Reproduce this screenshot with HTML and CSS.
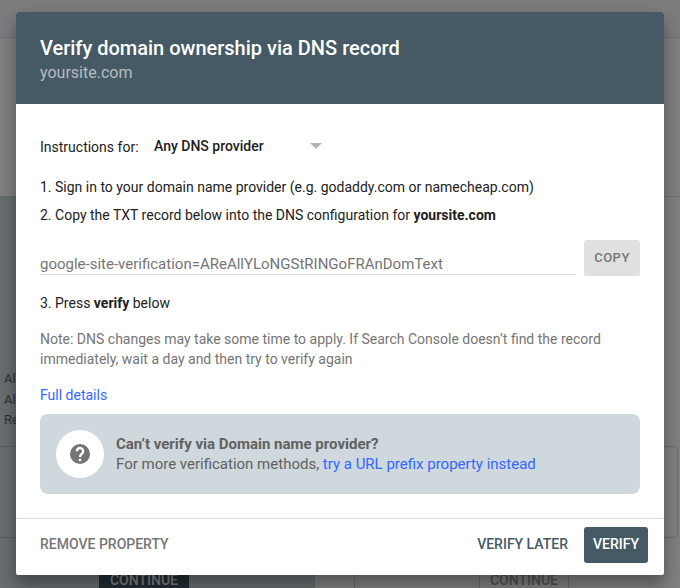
FILE: index.html
```html
<!DOCTYPE html>
<html lang="en">
  <head>
    <meta charset="UTF-8" />
    <title>Verify domain ownership</title>
    <link rel="stylesheet" href="styles.css">
  </head>
  <body>
    <div class="page">
      <div class="topbar"></div>
      <div class="intro"></div>
      <div class="panels">
        <div class="panel panel-domain">
          <ul class="features">
            <li>Al</li>
            <li>Al</li>
            <li>Re</li>
          </ul>
          <div class="field"></div>
          <div class="continue">CONTINUE</div>
        </div>
        <div class="divider"></div>
        <div class="panel panel-prefix">
          <div class="field"></div>
          <div class="continue">CONTINUE</div>
        </div>
      </div>
    </div>

    <div class="overlay">
      <div class="dialog" role="dialog">
        <header class="dialog-header">
          <h1>Verify domain ownership via DNS record</h1>
          <p>yoursite.com</p>
        </header>
        <div class="dialog-body">
          <div class="provider">
            <span class="provider-label">Instructions for:</span>
            <div class="select">
              <span>Any DNS provider</span>
              <i class="arrow"></i>
            </div>
          </div>
          <p class="step">1. Sign in to your domain name provider (e.g. godaddy.com or namecheap.com)</p>
          <p class="step">2. Copy the TXT record below into the DNS configuration for <b>yoursite.com</b></p>
          <div class="record">
            <div class="record-text">google-site-verification=AReAllYLoNGStRINGoFRAnDomText</div>
            <button class="copy">COPY</button>
          </div>
          <p class="step">3. Press <b>verify</b> below</p>
          <p class="note">Note: DNS changes may take some time to apply. If Search Console doesn’t find the record immediately, wait a day and then try to verify again</p>
          <a class="details">Full details</a>
          <div class="help">
            <div class="help-icon">
              <svg width="24" height="24" viewBox="0 0 24 24">
                <circle cx="12" cy="12" r="10" fill="#757575"/>
                <path d="M8.900 9.200a3.100 3.100 0 1 1 5.200 2.200c-1.200 1.100-2.100 1.600-2.100 3.600" fill="none" stroke="#fff" stroke-width="2.400"/>
                <path d="M10.800 16.700h2.400v2.400h-2.400z" fill="#fff"/>
              </svg>
            </div>
            <div>
              <p><b>Can’t verify via Domain name provider?</b></p>
              <p>For more verification methods, <a>try a URL prefix property instead</a></p>
            </div>
          </div>
        </div>
        <footer class="dialog-footer">
          <button class="remove">REMOVE PROPERTY</button>
          <button class="later">VERIFY LATER</button>
          <button class="verify">VERIFY</button>
        </footer>
      </div>
    </div>
  </body>
</html>
```

FILE: styles.css
```css
* {
  box-sizing: border-box;
}
body {
  margin: 0;
  height: 588px;
  overflow: hidden;
  font-family: Roboto, sans-serif;
  font-size: 14px;
  color: #212121;
}
h1,
p,
ul {
  margin: 0;
  padding: 0;
}
button {
  font-family: inherit;
  font-size: 14px;
  font-weight: 500;
  padding: 0 0 2px;
  border: none;
  border-radius: 3px;
  background: none;
}

/* page behind the dialog */
.page {
  height: 588px;
  overflow: hidden;
  background: #fff;
}
.topbar {
  height: 38px;
  background: #f8f8ff;
  border-bottom: 1px solid #e4e4e8;
}
.intro {
  height: 158px;
}
.panels {
  display: flex;
  height: 420px;
}
.panel {
  padding-top: 172px;
  border-top: 1px solid #ddd;
}
.panel-domain {
  width: 315px;
  background: #cfd8dc;
  border-color: #cfd8dc;
}
.divider {
  width: 40px;
  border-top: 1px solid #ddd;
  border-right: 1px solid #ccc;
}
.panel-prefix {
  flex: 1;
}
.features {
  height: 77px;
  padding-left: 4px;
  list-style: none;
  font-size: 13px;
  line-height: 20.500px;
  color: #616161;
}
.field {
  height: 92px;
  border: 1px solid #b0b7bb;
}
.panel-domain .field {
  border-width: 1px 0;
}
.panel-prefix .field {
  margin: 77px 2px 0 16px;
  border-color: #d8d8d8;
  border-radius: 4px;
}
.continue {
  width: 90px;
  height: 36px;
  margin: 26px 0 0 99px;
  border-radius: 3px;
  background: #455a64;
  color: #fff;
  font-weight: 500;
  line-height: 33px;
  text-align: center;
}
.panel-prefix .continue {
  margin-left: 124px;
  border: 1px solid #d8d8d8;
  background: none;
  color: #9e9e9e;
  line-height: 31px;
}

.overlay {
  position: absolute;
  top: 0;
  left: 0;
  width: 680px;
  height: 588px;
  padding: 12px 16px 13px;
  overflow: hidden;
  background: rgba(0, 0, 0, 0.5);
}
.dialog {
  display: flex;
  flex-direction: column;
  height: 563px;
  overflow: hidden;
  border-radius: 2px;
  background: #fff;
  box-shadow: 0 12px 15px 0 rgba(0, 0, 0, 0.24), 0 4px 16px 0 rgba(0, 0, 0, 0.15);
}
.dialog-header {
  height: 92px;
  padding: 24px 24px 0;
  background: #455a64;
  color: #fff;
}
.dialog-header h1 {
  font-size: 20px;
  font-weight: 500;
  line-height: 24px;
}
.dialog-header p {
  font-size: 16px;
  line-height: 26px;
  color: #b5bdc1;
}
.dialog-body {
  height: 414px;
  padding: 28px 24px 0;
  line-height: 20px;
}
.provider {
  display: flex;
  height: 45px;
}
.provider-label {
  width: 114px;
  padding-top: 5px;
}
.select {
  display: flex;
  justify-content: space-between;
  width: 168px;
  padding-top: 4px;
  font-weight: 500;
}
.arrow {
  margin-top: 7px;
  height: 0;
  border: 6px solid transparent;
  border-top-color: #b3b3b3;
  border-bottom: 0;
}
.step {
  margin-bottom: 8px;
}
.record {
  display: flex;
  gap: 8px;
  height: 36px;
  margin: 15px 0 17px;
}
.record-text {
  flex: 1;
  height: 35px;
  padding-top: 14px;
  border-bottom: 1px solid #e0e0e0;
  font-size: 15px;
  color: #757575;
}
.copy {
  width: 56px;
  background: #e0e0e0;
  color: #757575;
  font-size: 13px;
  letter-spacing: 0.5px;
}
.note {
  margin: 16px 0;
  color: #757575;
}
.details,
.help a {
  color: #3367ff;
}
.help {
  display: flex;
  align-items: center;
  gap: 12px;
  height: 80px;
  margin-top: 9px;
  padding-left: 16px;
  border-radius: 8px;
  background: #cfd8dc;
  font-size: 15px;
  color: #616161;
}
.help-icon {
  display: flex;
  align-items: center;
  justify-content: center;
  width: 48px;
  height: 48px;
  border-radius: 50%;
  background: #fff;
}
.dialog-footer {
  display: flex;
  flex: 1;
  padding: 8px 16px 12px 24px;
  border-top: 1px solid #e0e0e0;
  box-shadow: 0 -1px 2px rgba(0, 0, 0, 0.05);
}
.remove {
  margin-right: auto;
  color: #757575;
}
.later {
  margin-right: 16px;
  color: #455a64;
}
.verify {
  width: 64px;
  background: #455a64;
  color: #fff;
}
```
